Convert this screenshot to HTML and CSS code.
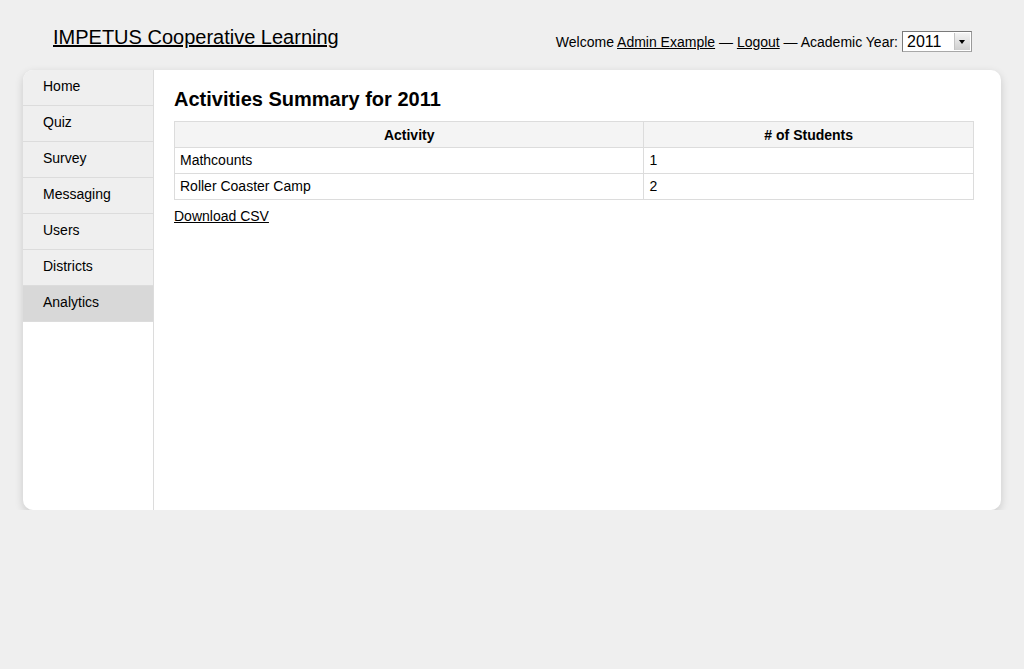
FILE: index.html
```html
<!DOCTYPE html>
<html>
<head>
<meta charset="utf-8">
<title>Analytics</title>
<link rel="stylesheet" href="styles.css">
</head>
<body>
<div class="page">
  <header class="header">
    <a class="site-title" href="#">IMPETUS Cooperative Learning</a>
    <div class="user-bar">
      <span>Welcome <a href="#">Admin Example</a> — <a href="#">Logout</a> — Academic Year:</span>
      <span class="year-select"><span class="year-value">2011</span><span class="year-arrow"></span></span>
    </div>
  </header>
  <div class="panel">
    <nav class="sidebar">
      <a class="nav-item" href="#">Home</a>
      <a class="nav-item" href="#">Quiz</a>
      <a class="nav-item" href="#">Survey</a>
      <a class="nav-item" href="#">Messaging</a>
      <a class="nav-item" href="#">Users</a>
      <a class="nav-item" href="#">Districts</a>
      <a class="nav-item active" href="#">Analytics</a>
    </nav>
    <main class="content">
      <h1 class="title">Activities Summary for 2011</h1>
      <table class="summary">
        <thead>
          <tr><th class="col-activity">Activity</th><th class="col-count"># of Students</th></tr>
        </thead>
        <tbody>
          <tr><td>Mathcounts</td><td>1</td></tr>
          <tr><td>Roller Coaster Camp</td><td>2</td></tr>
        </tbody>
      </table>
      <a class="download" href="#">Download CSV</a>
    </main>
  </div>
</div>
</body>
</html>
```

FILE: styles.css
```css
html, body {
  margin: 0;
  padding: 0;
  background: #efefef;
  font-family: "Liberation Sans", Arial, Helvetica, sans-serif;
  font-size: 14px;
  color: #000;
}
a { color: #000; text-decoration: underline; }

.page {
  padding: 0 23px;
}

.header {
  height: 70px;
  display: flex;
  justify-content: space-between;
  align-items: flex-start;
  padding: 0 29px 0 30px;
  box-sizing: border-box;
}
.site-title {
  font-size: 20px;
  line-height: 24px;
  margin-top: 25px;
}
.user-bar {
  margin-top: 31px;
  height: 21px;
  display: flex;
  align-items: center;
  gap: 4px;
  line-height: 18px;
}
.year-select {
  width: 70px;
  height: 21px;
  box-sizing: border-box;
  background: #fff;
  border: 1px solid #7a7a7a;
  border-right-color: #9a9a9a;
  border-bottom-color: #a8a8a8;
  display: flex;
  align-items: stretch;
}
.year-value {
  flex: 1;
  font-size: 16px;
  line-height: 19px;
  padding-left: 4px;
}
.year-arrow {
  width: 15px;
  margin: 1px;
  background: linear-gradient(#f4f4f4, #cfcfcf);
  border-left: 1px solid #c4c4c4;
  position: relative;
}
.year-arrow::after {
  content: "";
  position: absolute;
  left: 4px;
  top: 7px;
  border-left: 3px solid transparent;
  border-right: 3px solid transparent;
  border-top: 4px solid #000;
}

.panel {
  height: 440px;
  background: #fff;
  border-radius: 10px;
  box-shadow: 0 3px 9px rgba(0, 0, 0, 0.16);
  display: flex;
  overflow: hidden;
}
.sidebar {
  width: 130px;
  border-right: 1px solid #dcdcdc;
  display: flex;
  flex-direction: column;
}
.nav-item {
  display: block;
  padding: 7px 0 0 20px;
  height: 28px;
  line-height: 18px;
  border-bottom: 1px solid #dcdcdc;
  background: #efefef;
  text-decoration: none;
}
.nav-item.active {
  background: #d8d8d8;
}

.content {
  flex: 1;
  padding: 17px 20px 0 20px;
}
.title {
  margin: 0;
  font-size: 20px;
  line-height: 24px;
  font-weight: bold;
}
.summary {
  margin-top: 10px;
  width: 800px;
  border-collapse: collapse;
  border: 1px solid #dcdcdc;
}
.summary th,
.summary td {
  border: 1px solid #dcdcdc;
  padding: 0 5px 2px 5px;
  line-height: 18px;
  box-sizing: border-box;
  height: 26px;
}
.summary th {
  background: #f4f4f4;
  font-weight: bold;
  text-align: center;
  padding-bottom: 0;
}
.summary td { text-align: left; }
.col-activity { width: 470px; }
.col-count { width: 330px; }

.download {
  display: inline-block;
  margin-top: 7px;
  line-height: 18px;
}
```
